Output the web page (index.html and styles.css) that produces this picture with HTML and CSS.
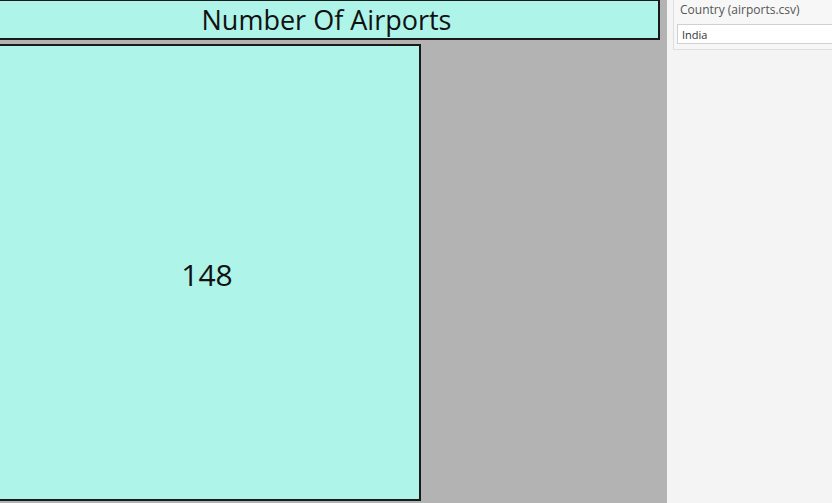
FILE: index.html
```html
<!DOCTYPE html>
<html>
<head>
  <link rel="stylesheet" href="styles.css">
</head>
<body>
  <div class="dashboard">
    <div class="canvas">
      <div class="title-box">Number Of Airports</div>
      <div class="kpi-box">
        <span class="kpi-value">148</span>
      </div>
    </div>
    <div class="side-panel">
      <div class="filter-card">
        <div class="filter-label">Country (airports.csv)</div>
        <div class="filter-input">India</div>
      </div>
    </div>
  </div>
</body>
</html>
```

FILE: styles.css
```css
body {
  margin: 0;
  font-family: "Open Sans", Arial, sans-serif;
  overflow: hidden;
}
.dashboard {
  display: flex;
  width: 832px;
  height: 503px;
}
.canvas {
  width: 667px;
  background-color: #b3b3b3;
  display: flex;
  flex-direction: column;
  gap: 4px;
}
.title-box {
  box-sizing: border-box;
  margin: -1px 0 0 -7px;
  width: 667px;
  height: 41px;
  border: 2px solid #1a1a1a;
  background-color: #aef4e9;
  display: flex;
  align-items: center;
  justify-content: center;
  font-size: 27px;
  color: #111;
}
.kpi-box {
  box-sizing: border-box;
  margin-left: -7px;
  width: 428px;
  height: 457px;
  border: 2px solid #1a1a1a;
  background-color: #aef4e9;
  display: flex;
  align-items: center;
  justify-content: center;
}
.kpi-value {
  font-size: 30px;
  color: #111;
  margin-top: 3px;
}
.side-panel {
  flex: 1;
  background-color: #f4f4f4;
  padding-left: 6px;
}
.filter-card {
  box-sizing: border-box;
  margin-top: -1px;
  height: 51px;
  background-color: #f7f7f7;
  border: 1px solid #dedede;
  border-right: none;
  padding: 1px 0 0 3px;
}
.filter-label {
  font-size: 12px;
  color: #555;
  padding-left: 3px;
  height: 23px;
}
.filter-input {
  box-sizing: border-box;
  height: 20px;
  background-color: #fff;
  border: 1px solid #d0d0d0;
  border-right: none;
  font-size: 11px;
  color: #333;
  padding: 2px 0 0 4px;
}
```
